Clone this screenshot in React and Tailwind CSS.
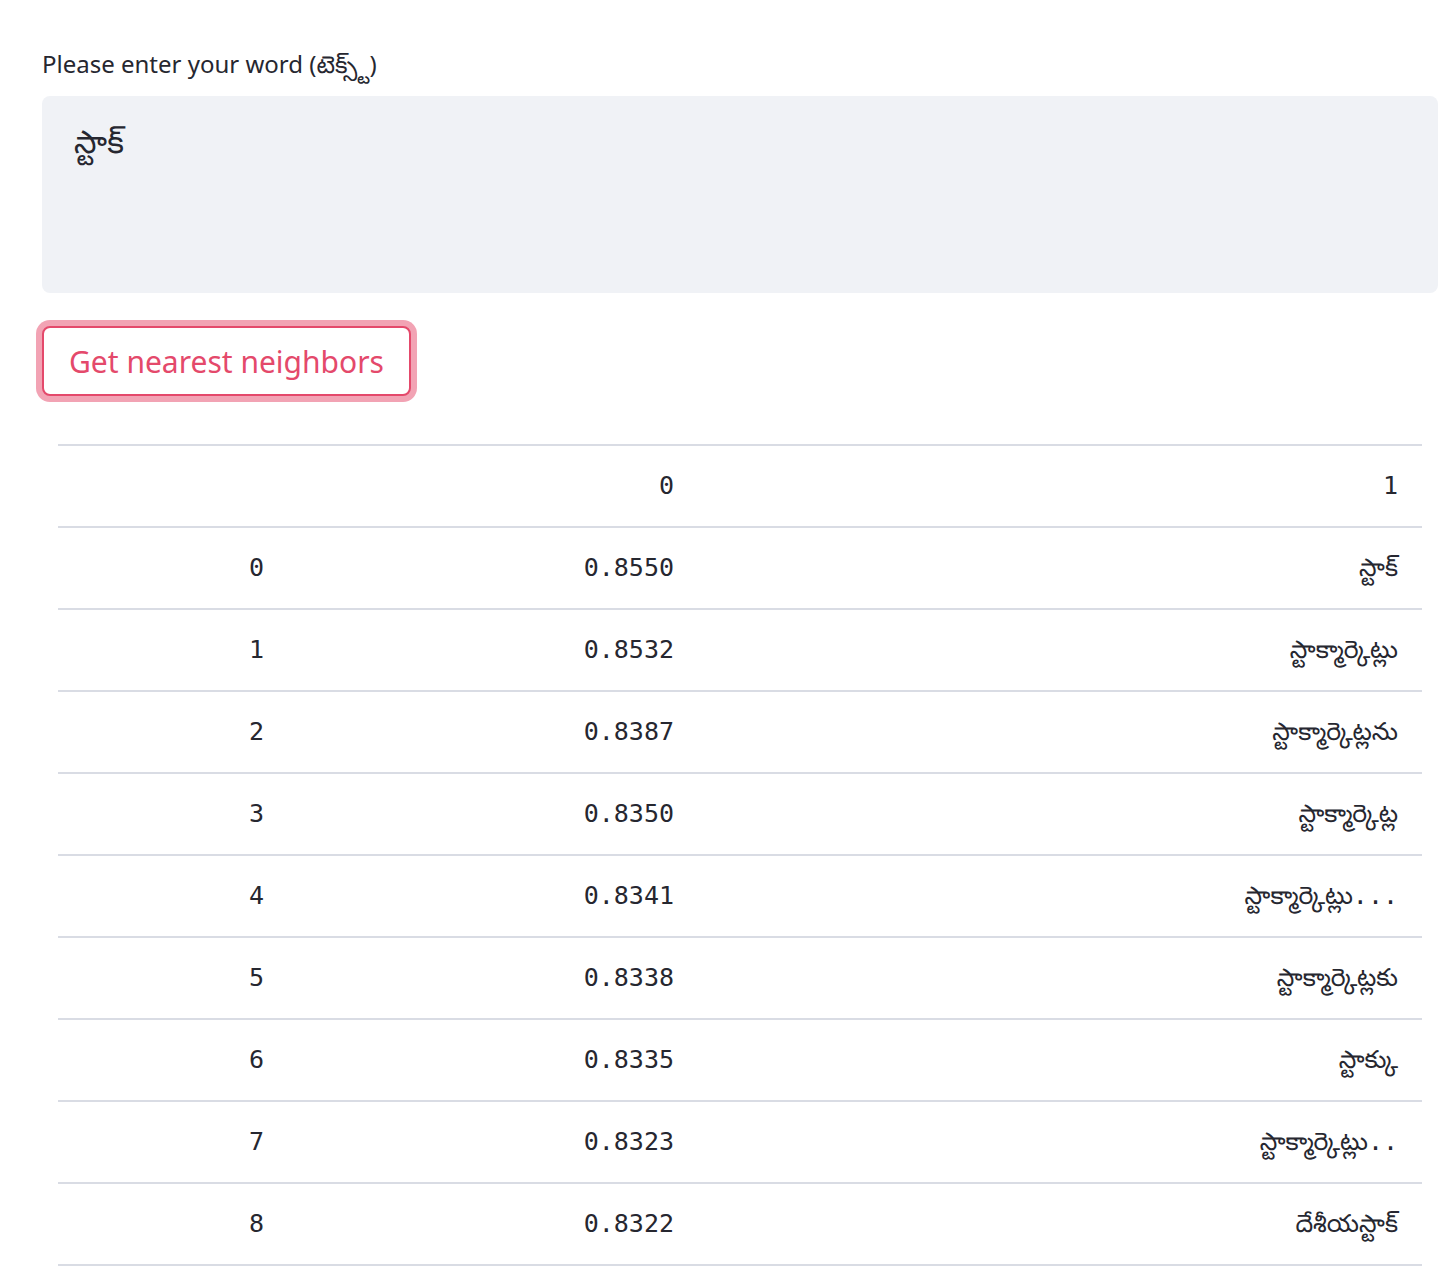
const rows = [
  ["0", "0.8550", "స్టాక్"],
  ["1", "0.8532", "స్టాక్మార్కెట్లు"],
  ["2", "0.8387", "స్టాక్మార్కెట్లను"],
  ["3", "0.8350", "స్టాక్మార్కెట్ల"],
  ["4", "0.8341", "స్టాక్మార్కెట్లు..."],
  ["5", "0.8338", "స్టాక్మార్కెట్లకు"],
  ["6", "0.8335", "స్టాక్కు"],
  ["7", "0.8323", "స్టాక్మార్కెట్లు.."],
  ["8", "0.8322", "దేశీయస్టాక్"],
];

const sans = "font-['Noto_Sans','Noto_Sans_Telugu',sans-serif]";
const mono = "font-['DejaVu_Sans_Mono','Noto_Sans_Telugu',monospace]";

const App = () => {
  return (
    <div className={`min-h-screen bg-white pt-[44px] pl-[42px] pr-[10px] text-[#262730] ${sans}`}>
      {/* Text input */}
      <label className="block h-[39px] mb-[13px] text-[24px] leading-[39px]">
        Please enter your word (టెక్స్ట్)
      </label>
      <textarea
        readOnly
        defaultValue="స్టాక్"
        className="block w-full h-[197px] resize-none rounded-[8px] bg-[#f0f2f6] px-[32px] pt-[22px] text-[32px] leading-[46px] outline-none"
      />

      {/* Button */}
      <button className="mt-[33px] h-[70px] w-[369px] rounded-[8px] border-2 border-[#e4496b] bg-white text-[30px] text-[#e4496b] shadow-[0_0_0_6px_#f2a3b4]">
        Get nearest neighbors
      </button>

      {/* Results table */}
      <table className={`mt-[48px] ml-[16px] w-[1364px] border-collapse text-[25px] ${mono}`}>
        <thead>
          <tr className="h-[82px] border-y-2 border-[#d9dce4]">
            <th className="w-[230px]" />
            <th className="w-[410px] pr-[24px] text-right font-normal">0</th>
            <th className="pr-[24px] text-right font-normal">1</th>
          </tr>
        </thead>
        <tbody>
          {rows.map(([idx, score, word]) => (
            <tr key={idx} className="h-[82px] border-b-2 border-[#d9dce4]">
              <td className="pr-[24px] text-right">{idx}</td>
              <td className="pr-[24px] text-right">{score}</td>
              <td className="pr-[24px] text-right">{word}</td>
            </tr>
          ))}
        </tbody>
      </table>
    </div>
  );
};

export default App;
